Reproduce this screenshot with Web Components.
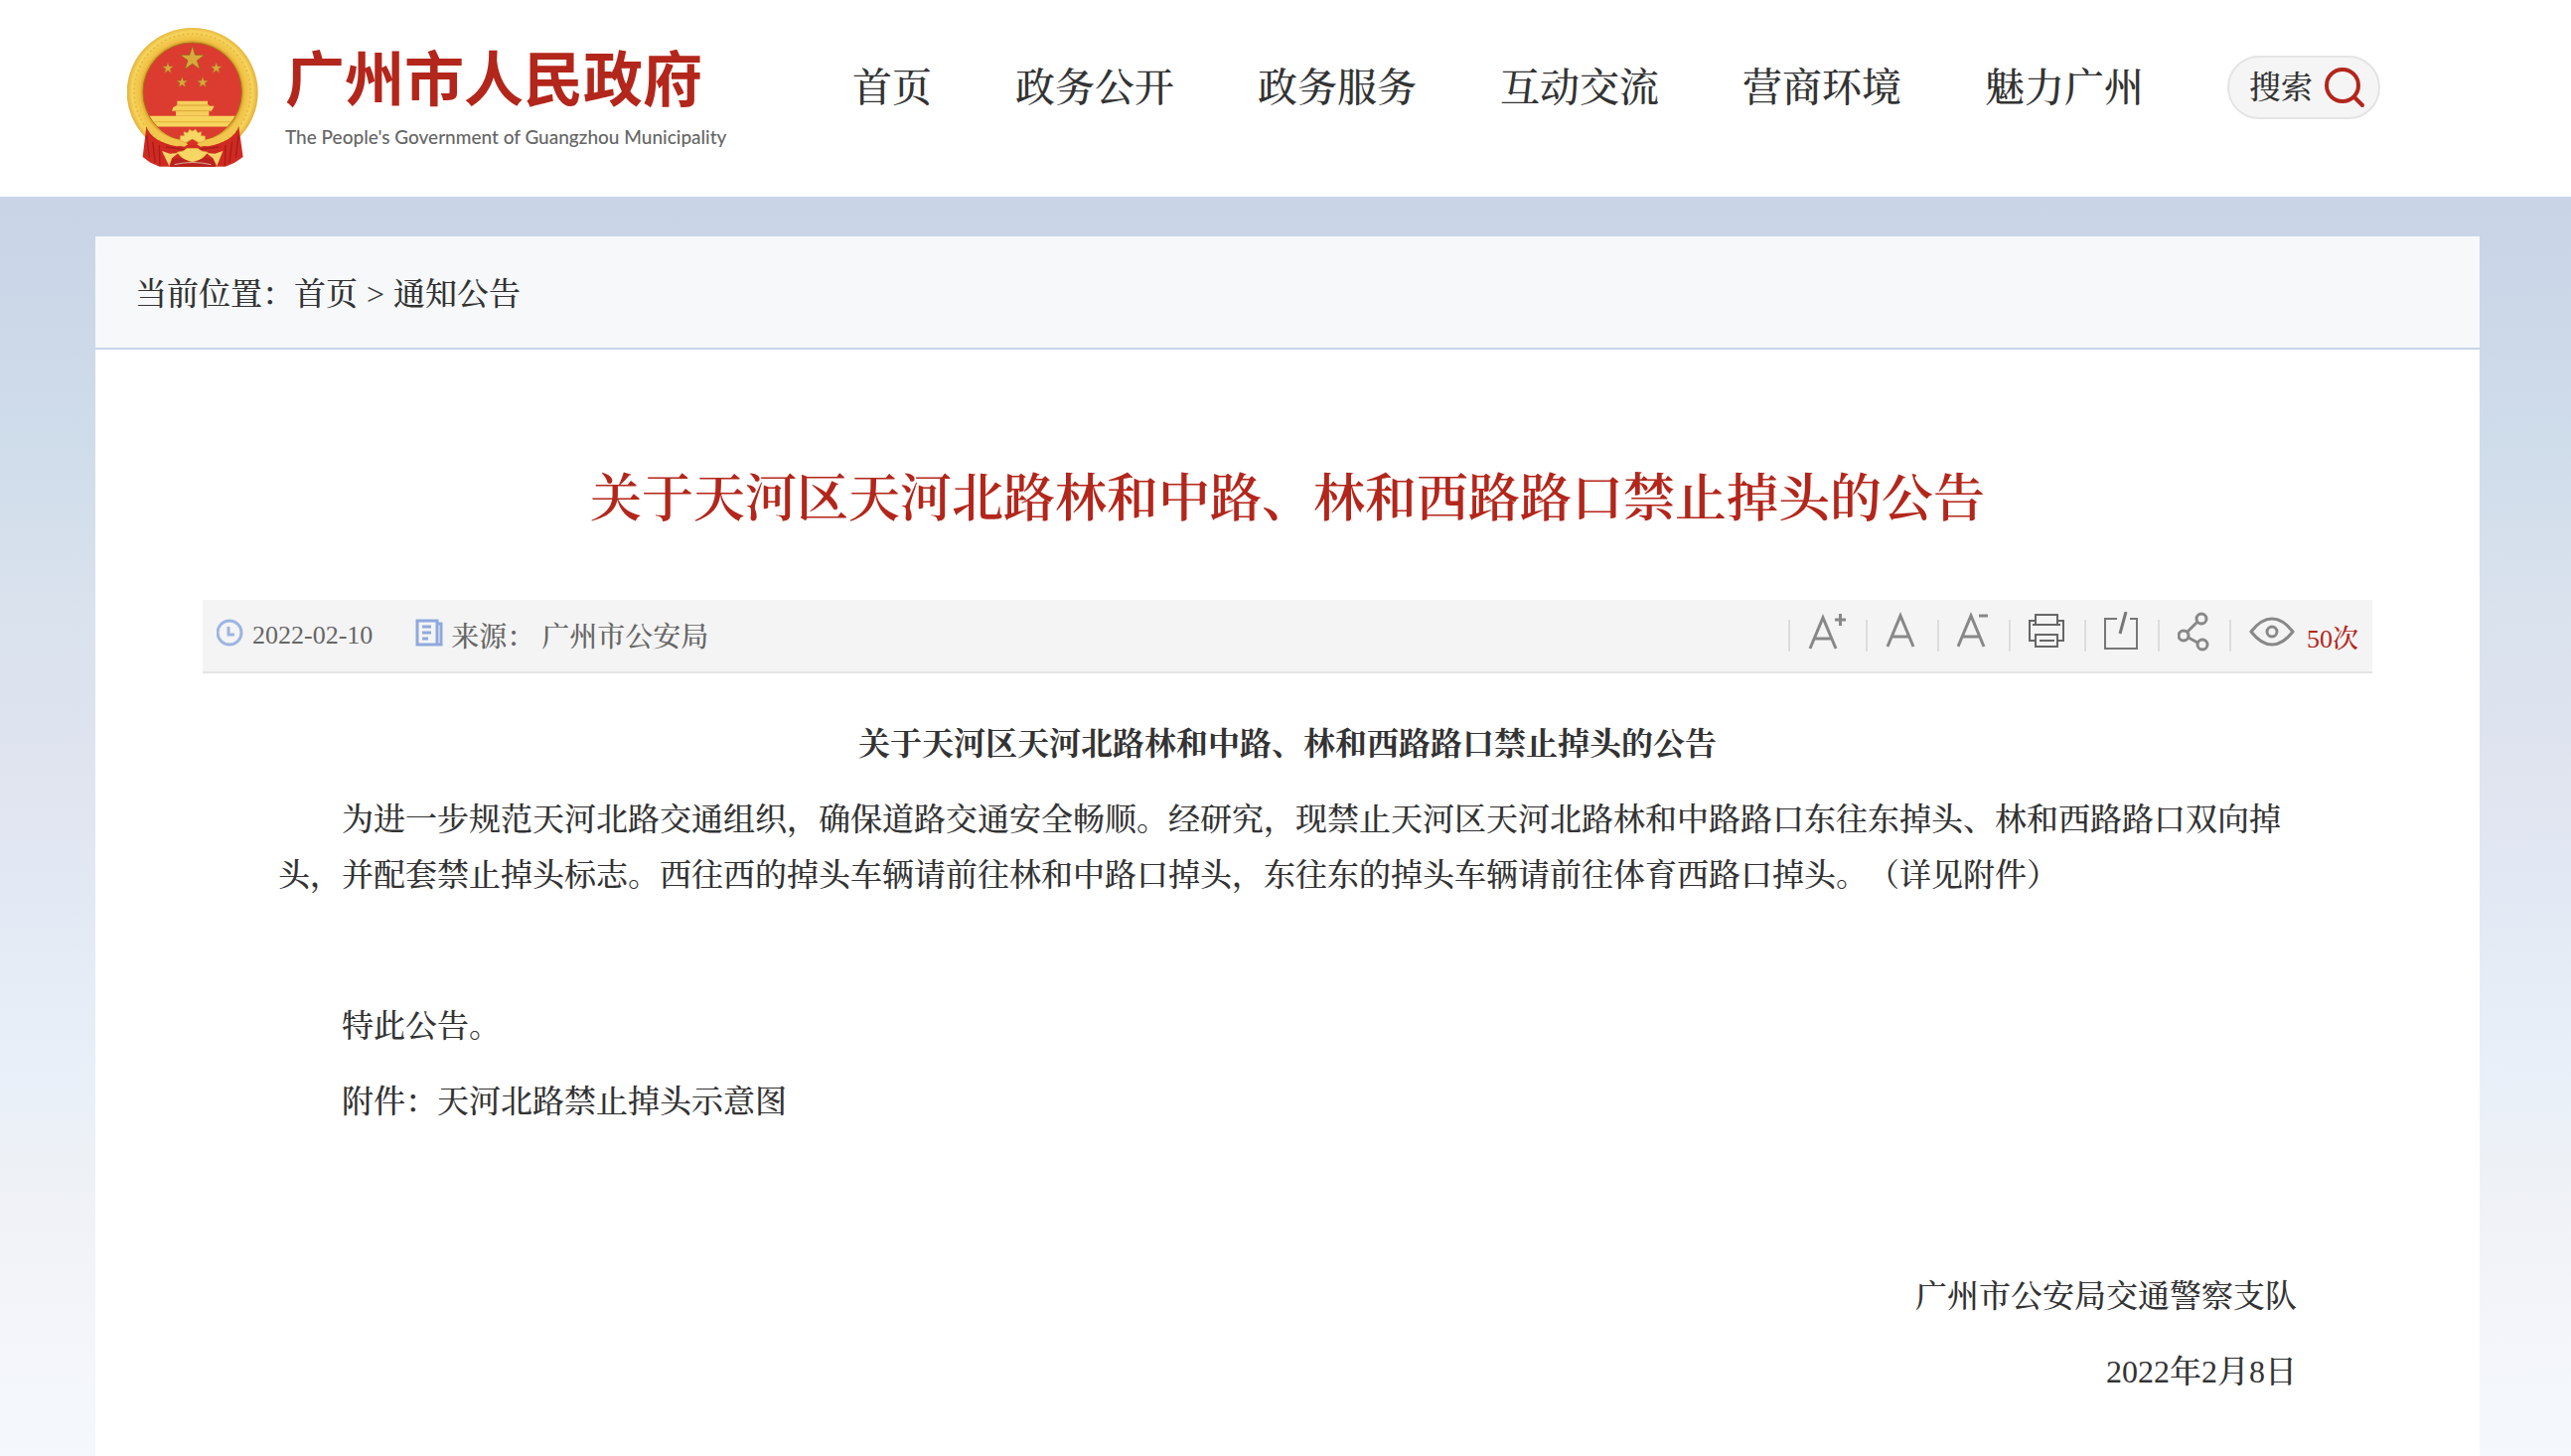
<!DOCTYPE html>
<html lang="zh-CN">
<head>
<meta charset="utf-8">
<title>关于天河区天河北路林和中路、林和西路路口禁止掉头的公告</title>
<style>
  :root {
    --red: #b3261b;
    --text: #333;
    --muted: #666;
    --line: #c9d4e8;
  }

  body {
    margin: 0;
    min-height: 100vh;
    background: linear-gradient(#c9d4e6 14%, #cfdcea 30%, #d9e2ed 41%, #dfe4ef 52%, #e5ecf6 66%, #e9f0f8 74%, #eef1f5 80%, #f3f4fa 88%, #f4f9fd);
    color: var(--text);
    font-family: "Liberation Serif", "Noto Serif CJK SC", "Noto Sans CJK SC", serif;
    font-size: 32px;
    font-weight: 500;
    line-height: 56px;
    text-spacing-trim: space-all;
  }
</style>
</head>
<body>
<site-header>
  <site-logo slot="logo"></site-logo>
  <nav-link href="#home">首页</nav-link>
  <nav-link href="#zwgk">政务公开</nav-link>
  <nav-link href="#zwfw">政务服务</nav-link>
  <nav-link href="#hdjl">互动交流</nav-link>
  <nav-link href="#yshj">营商环境</nav-link>
  <nav-link href="#mlgz">魅力广州</nav-link>
  <search-button>搜索</search-button>
</site-header>

<page-panel>
  <bread-crumb slot="crumb"></bread-crumb>
  <span slot="title">关于天河区天河北路林和中路、林和西路路口禁止掉头的公告</span>
  <article-meta slot="meta" date="2022-02-10" source="广州市公安局" views="50"></article-meta>
  <notice-body>
    <span slot="heading">关于天河区天河北路林和中路、林和西路路口禁止掉头的公告</span>
    <notice-line>为进一步规范天河北路交通组织，确保道路交通安全畅顺。经研究，现禁止天河区天河北路林和中路路口东往东掉头、林和西路路口双向掉头，并配套禁止掉头标志。西往西的掉头车辆请前往林和中路口掉头，东往东的掉头车辆请前往体育西路口掉头。（详见附件）</notice-line>
    <notice-line></notice-line>
    <notice-line>特此公告。</notice-line>
    <notice-line>附件：天河北路禁止掉头示意图</notice-line>
    <span slot="sign">广州市公安局交通警察支队</span>
    <span slot="signdate">2022年2月8日</span>
  </notice-body>
</page-panel>

<script>
class SiteHeader extends HTMLElement {
  constructor () {
    super()
    this.attachShadow({ mode: 'open' })
    this.shadowRoot.innerHTML =
      /* html */`
      <style>
        :host {
          display: block;
          background: #fff;
        }
        header {
          display: flex;
          justify-content: space-between;
          align-items: flex-start;
          height: 198px;
          padding: 0 192px 0 128px;
          box-sizing: border-box;
        }
        nav {
          display: flex;
          align-items: center;
          gap: 84px;
          padding-top: 56px;
        }
      </style>
      <header>
        <slot name="logo"></slot>
        <nav><slot></slot></nav>
      </header>
      `
  }
}

class SiteLogo extends HTMLElement {
  constructor () {
    super()
    this.attachShadow({ mode: 'open' })
    this.shadowRoot.innerHTML =
      /* html */`
      <style>
        :host {
          display: block;
          padding-top: 28px;
        }
        a {
          display: flex;
          gap: 27px;
          color: inherit;
          text-decoration: none;
        }
        svg {
          width: 132px;
          height: 140px;
        }
        .names {
          display: flex;
          flex-direction: column;
          padding-top: 12px;
          white-space: nowrap;
        }
        .cn {
          color: var(--red);
          font: bold 60px/72px "Noto Sans CJK SC", sans-serif;
        }
        .en {
          color: var(--muted);
          font: 500 19px/52px Lato, "Open Sans", sans-serif;
        }
      </style>
      <a href="#home">
        <svg viewBox="55 54 396 420" aria-hidden="true">
          <defs>
            <path id="star" d="M0-10 2.2-3.1 9.5-3.1 3.6 1.2 5.9 8.1 0 3.8-5.9 8.1-3.6 1.2-9.5-3.1-2.2-3.1Z"/>
            <radialGradient id="gold" gradientUnits="userSpaceOnUse" cx="252" cy="248" r="198">
              <stop offset=".74" stop-color="#c98d22"/>
              <stop offset=".8" stop-color="#efc043"/>
              <stop offset=".92" stop-color="#f6d45c"/>
              <stop offset="1" stop-color="#e3b03a"/>
            </radialGradient>
            <clipPath id="disc"><circle cx="252" cy="248" r="148"/></clipPath>
          </defs>
          <ellipse cx="252" cy="249" rx="198" ry="195" fill="url(#gold)"/>
          <circle cx="252" cy="248" r="176" fill="none" stroke="#e6b43c" stroke-width="5" stroke-dasharray="5 9"/>
          <circle cx="252" cy="248" r="149" fill="#dc3c30" stroke="#a8701c" stroke-width="3"/>
          <g fill="#d9a93c" stroke="#8a5a1a" stroke-width=".5">
            <use href="#star" transform="translate(252 148) scale(3.9)"/>
            <use href="#star" transform="translate(178 176) scale(1.8)"/>
            <use href="#star" transform="translate(324 176) scale(1.8)"/>
            <use href="#star" transform="translate(221 219) scale(1.8)"/>
            <use href="#star" transform="translate(283 219) scale(1.8)"/>
          </g>
          <g clip-path="url(#disc)">
            <path d="M120 320H384L376 353H128Z" fill="#f7d45c"/>
            <path d="M120 338H384" stroke="#e8b944" stroke-width="4"/>
          </g>
          <path d="M206 275H298V285L304 290H318L310 305H302V320H202V305H190L194 294 206 288Z" fill="#f5cf5a"/>
          <path d="M194 305H310M204 288H300" stroke="#dba437" stroke-width="3"/>
          <path d="M113 352Q128 398 205 412L252 406 299 412Q376 398 392 352L405 444 380 461 352 473H153L125 461 102 444Z" fill="#cf2a22"/>
          <path d="M122 340Q160 386 212 392L240 404 228 413Q150 404 108 346ZM382 340Q344 386 292 392L264 404 276 413Q354 404 396 346Z" fill="#f2c64c"/>
          <path d="M148 353H356Q332 382 292 390H212Q172 382 148 353Z" fill="#dc3c30"/>
          <path d="M114 380 122 446M132 398 140 462M152 408 154 470M391 380 383 446M372 398 364 462M352 408 350 470M172 414 250 424 332 414" fill="none" stroke="#a81c1a" stroke-width="4"/>
          <path d="M214 394 216 380 227 380 226 368 238 371 243 361 252 366 262 361 268 371 279 368 278 380 290 381 291 394 274 401 252 390 230 401Z" fill="#f7d763" stroke="#d7a137" stroke-width="2"/>
          <path d="M234 402 252 392 270 402 264 410H240Z" fill="#d92f25"/>
          <path d="M205 430 224 426 236 418H268L280 426 299 430 286 444 274 454 252 459 230 454 218 444Z" fill="#f7d763" stroke="#d7a137" stroke-width="2"/>
          <path d="M160 426 184 434 210 432 190 448 182 472ZM344 426 320 434 294 432 314 448 326 472Z" fill="#f3d268"/>
          <path d="M184 474 192 450 218 446 252 462 288 446 314 450 322 474Z" fill="#b9221e"/>
          <path d="M198 467Q252 454 308 467" fill="none" stroke="#d8b096" stroke-width="3"/>
        </svg>
        <span class="names">
          <span class="cn">广州市人民政府</span>
          <span class="en">The People's Government of Guangzhou Municipality</span>
        </span>
      </a>
      `
  }
}

class NavLink extends HTMLElement {
  constructor () {
    super()
    this.attachShadow({ mode: 'open' })
  }

  connectedCallback () {
    this.shadowRoot.innerHTML =
      /* html */`
      <style>
        :host {
          display: block;
          padding-top: 4px;
        }
        a {
          color: inherit;
          font-size: 40px;
          text-decoration: none;
          white-space: nowrap;
        }
        a:hover {
          color: var(--red);
        }
      </style>
      <a href="${this.getAttribute('href')}"><slot></slot></a>
      `
  }
}

class SearchButton extends HTMLElement {
  constructor () {
    super()
    this.attachShadow({ mode: 'open' })
    this.shadowRoot.innerHTML =
      /* html */`
      <style>
        :host {
          display: block;
        }
        button {
          display: flex;
          align-items: center;
          gap: 12px;
          height: 64px;
          padding: 0 12px 0 20px;
          border: 2px solid #e4e4e4;
          border-radius: 32px;
          background: #f5f5f5;
          color: inherit;
          font: inherit;
          white-space: nowrap;
          cursor: pointer;
        }
        svg {
          width: 42px;
          height: 42px;
        }
      </style>
      <button type="button">
        <slot></slot>
        <svg viewBox="0 0 42 42" fill="none" stroke="#b3261b" stroke-width="4" stroke-linecap="round" aria-hidden="true">
          <circle cx="18" cy="19" r="16"/>
          <path d="M30 31 38 39"/>
        </svg>
      </button>
      `
  }
}

class PagePanel extends HTMLElement {
  constructor () {
    super()
    this.attachShadow({ mode: 'open' })
    this.shadowRoot.innerHTML =
      /* html */`
      <style>
        :host {
          display: block;
          padding: 40px 92px 0 96px;
        }
        main {
          min-height: calc(100vh - 238px);
          background: #fff;
        }
        .content {
          padding: 115px 108px 0;
        }
        h1 {
          margin: 0 0 65px;
          color: var(--red);
          font-size: 52px;
          font-weight: 600;
          line-height: 72px;
          text-align: center;
        }
      </style>
      <main>
        <slot name="crumb"></slot>
        <div class="content">
          <h1><slot name="title"></slot></h1>
          <slot name="meta"></slot>
          <slot></slot>
        </div>
      </main>
      `
  }
}

class BreadCrumb extends HTMLElement {
  constructor () {
    super()
    this.attachShadow({ mode: 'open' })
    this.shadowRoot.innerHTML =
      /* html */`
      <style>
        :host {
          display: block;
          padding: 30px 40px 26px;
          border-bottom: 2px solid var(--line);
          background: #f6f8fa;
        }
        a {
          color: inherit;
          text-decoration: none;
        }
        nav span {
          padding: 0 1px;
        }
      </style>
      <nav>当前位置：<a href="#home">首页</a> <span>&gt;</span> <a href="#tzgg">通知公告</a></nav>
      `
  }
}

class ArticleMeta extends HTMLElement {
  constructor () {
    super()
    this.attachShadow({ mode: 'open' })
  }

  connectedCallback () {
    this.shadowRoot.innerHTML =
      /* html */`
      <style>
        :host {
          display: flex;
          justify-content: space-between;
          height: 72px;
          padding: 0 14px;
          border-bottom: 2px solid #e4e4e4;
          background: #f4f4f4;
          color: var(--muted);
          font-size: 28px;
          line-height: 72px;
          white-space: nowrap;
        }
        .info, .tools, .views {
          display: flex;
        }
        .info {
          gap: 43px;
        }
        .info > span {
          display: flex;
          gap: 8px;
        }
        .info svg {
          width: 28px;
          height: 28px;
          margin-top: 19px;
        }
        .source {
          line-height: 76px;
        }
        time {
          font-size: 26px;
        }
        .tools {
          height: 40px;
          padding-top: 12px;
        }
        .tool {
          display: flex;
          align-items: flex-end;
          gap: 18px;
          height: 40px;
          margin: 0;
          padding: 0 20px 0 0;
          border: 0;
          background: none;
          color: #888;
        }
        button.tool {
          cursor: pointer;
        }
        .tool::before {
          content: "";
          width: 2px;
          height: 32px;
          background: #ddd;
        }
        .tool svg {
          height: 40px;
          fill: none;
          stroke: currentColor;
          stroke-width: 3px;
        }
        .views {
          gap: 12px;
          color: var(--red);
          font-size: 26px;
          line-height: 56px;
        }
        .views .tool {
          padding: 0;
        }
      </style>
      <div class="info">
        <span>
          <svg viewBox="0 0 28 28" fill="none" stroke="#9db5e2" stroke-width="3" aria-hidden="true">
            <circle cx="13" cy="14" r="12"/>
            <path d="M12 8V16H18"/>
          </svg>
          <time>${this.getAttribute('date')}</time>
        </span>
        <span>
          <svg viewBox="0 0 28 28" fill="none" stroke="#8fa9de" stroke-width="3" aria-hidden="true">
            <path d="M2 2H22V26H2ZM22 5H26V26H20"/>
            <path d="M7 8H16M7 14H16M7 20H13"/>
          </svg>
          <span class="source">来源： ${this.getAttribute('source')}</span>
        </span>
      </div>
      <div class="tools">
        <button type="button" class="tool" aria-label="放大字体">
          <svg width="38" viewBox="0 0 38 40"><path d="M2 37 15 6 28 37M7 27H23M27 8H38M32.500 2V14"/></svg>
        </button>
        <button type="button" class="tool" aria-label="默认字体">
          <svg width="32" viewBox="0 0 32 40"><path d="M2 35 15 4 28 35M7 25H23"/></svg>
        </button>
        <button type="button" class="tool" aria-label="缩小字体">
          <svg width="32" viewBox="0 0 32 40"><path d="M1 35 14 4 27 35M6 25H22M22 4H31"/></svg>
        </button>
        <button type="button" class="tool" aria-label="打印">
          <svg width="36" viewBox="0 0 36 40" style="color: #666; stroke-width: 2px"><path d="M7 9H1V29H7M29 9H35V29H29M7 3H29V13H7ZM4 13H32M7 23H29V35H7ZM11 29H26"/></svg>
        </button>
        <button type="button" class="tool" aria-label="编辑">
          <svg width="34" viewBox="0 0 34 40" style="color: #777; stroke-width: 2px"><path d="M13 7H1V37H33V7H26"/><path d="M22 0 16 22" stroke-width="3"/></svg>
        </button>
        <button type="button" class="tool" aria-label="分享">
          <svg width="32" viewBox="0 0 32 40"><circle cx="24" cy="7" r="5"/><circle cx="6" cy="24" r="5"/><circle cx="25" cy="33" r="5"/><path d="M10 20 20 10M11 26 20 31"/></svg>
        </button>
        <span class="views">
          <span class="tool">
            <svg width="46" viewBox="0 0 46 40"><path d="M2 20Q12 7 23 7T44 20Q34 33 23 33T2 20Z"/><circle cx="23" cy="20" r="5"/></svg>
          </span>
          <span>${this.getAttribute('views')}次</span>
        </span>
      </div>
      `
  }
}

class NoticeBody extends HTMLElement {
  constructor () {
    super()
    this.attachShadow({ mode: 'open' })
    this.shadowRoot.innerHTML =
      /* html */`
      <style>
        :host {
          display: block;
          padding: 43px 76px 56px;
        }
        h2, p {
          margin: 0 0 20px;
          font-size: 32px;
        }
        h2 {
          text-align: center;
        }
        footer {
          margin-top: 140px;
          text-align: right;
        }
      </style>
      <article>
        <h2><slot name="heading"></slot></h2>
        <slot></slot>
        <footer>
          <p><slot name="sign"></slot></p>
          <p><slot name="signdate"></slot></p>
        </footer>
      </article>
      `
  }
}

class NoticeLine extends HTMLElement {
  constructor () {
    super()
    this.attachShadow({ mode: 'open' })
    this.shadowRoot.innerHTML =
      /* html */`
      <style>
        :host {
          display: block;
          margin-bottom: 20px;
        }
        p {
          min-height: 56px;
          margin: 0;
          text-indent: 2em;
        }
      </style>
      <p><slot></slot></p>
      `
  }
}

customElements.define('site-header', SiteHeader)
customElements.define('site-logo', SiteLogo)
customElements.define('nav-link', NavLink)
customElements.define('search-button', SearchButton)
customElements.define('page-panel', PagePanel)
customElements.define('bread-crumb', BreadCrumb)
customElements.define('article-meta', ArticleMeta)
customElements.define('notice-body', NoticeBody)
customElements.define('notice-line', NoticeLine)
</script>
</body>
</html>
